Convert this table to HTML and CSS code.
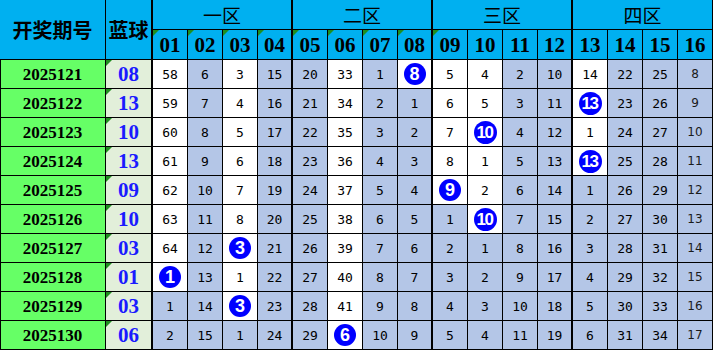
FILE: index.html
```html
<!DOCTYPE html>
<html lang="zh-CN">
<head>
<meta charset="utf-8">
<title>蓝球分区遗漏</title>
<link rel="stylesheet" href="styles.css">
</head>
<body>
<div class="sheet">
  <div class="row head">
    <div class="hp">开奖期号</div>
    <div class="hb">蓝球</div>
    <div class="hz">一区</div>
    <div class="hz">二区</div>
    <div class="hz">三区</div>
    <div class="hz last">四区</div>
  </div>
  <div class="row nums">
    <div class="spacer"></div><div class="spacer"></div>
    <div class="hn tri">01</div><div class="hn tri">02</div><div class="hn tri">03</div><div class="hn tri">04</div>
    <div class="hn tri">05</div><div class="hn tri">06</div><div class="hn tri">07</div><div class="hn tri">08</div>
    <div class="hn tri">09</div><div class="hn">10</div><div class="hn">11</div><div class="hn">12</div>
    <div class="hn">13</div><div class="hn">14</div><div class="hn">15</div><div class="hn">16</div>
  </div>

  <div class="row">
    <div class="p">2025121</div><div class="b tri">08</div>
    <div class="c w">58</div><div class="c">6</div><div class="c w">3</div><div class="c">15</div>
    <div class="c">20</div><div class="c w">33</div><div class="c">1</div><div class="c w"><span class="ball">8</span></div>
    <div class="c w">5</div><div class="c w">4</div><div class="c">2</div><div class="c">10</div>
    <div class="c w">14</div><div class="c">22</div><div class="c">25</div><div class="c">8</div>
  </div>
  <div class="row">
    <div class="p">2025122</div><div class="b tri">13</div>
    <div class="c w">59</div><div class="c">7</div><div class="c w">4</div><div class="c">16</div>
    <div class="c">21</div><div class="c w">34</div><div class="c">2</div><div class="c">1</div>
    <div class="c w">6</div><div class="c w">5</div><div class="c">3</div><div class="c">11</div>
    <div class="c w"><span class="ball two">13</span></div><div class="c">23</div><div class="c">26</div><div class="c">9</div>
  </div>
  <div class="row">
    <div class="p">2025123</div><div class="b tri">10</div>
    <div class="c w">60</div><div class="c">8</div><div class="c w">5</div><div class="c">17</div>
    <div class="c">22</div><div class="c w">35</div><div class="c">3</div><div class="c">2</div>
    <div class="c w">7</div><div class="c w"><span class="ball two">10</span></div><div class="c">4</div><div class="c">12</div>
    <div class="c w">1</div><div class="c">24</div><div class="c">27</div><div class="c">10</div>
  </div>
  <div class="row">
    <div class="p">2025124</div><div class="b tri">13</div>
    <div class="c w">61</div><div class="c">9</div><div class="c w">6</div><div class="c">18</div>
    <div class="c">23</div><div class="c w">36</div><div class="c">4</div><div class="c">3</div>
    <div class="c w">8</div><div class="c w">1</div><div class="c">5</div><div class="c">13</div>
    <div class="c w"><span class="ball two">13</span></div><div class="c">25</div><div class="c">28</div><div class="c">11</div>
  </div>
  <div class="row">
    <div class="p">2025125</div><div class="b tri">09</div>
    <div class="c w">62</div><div class="c">10</div><div class="c w">7</div><div class="c">19</div>
    <div class="c">24</div><div class="c w">37</div><div class="c">5</div><div class="c">4</div>
    <div class="c w"><span class="ball">9</span></div><div class="c w">2</div><div class="c">6</div><div class="c">14</div>
    <div class="c">1</div><div class="c">26</div><div class="c">29</div><div class="c">12</div>
  </div>
  <div class="row">
    <div class="p">2025126</div><div class="b tri">10</div>
    <div class="c w">63</div><div class="c">11</div><div class="c w">8</div><div class="c">20</div>
    <div class="c">25</div><div class="c w">38</div><div class="c">6</div><div class="c">5</div>
    <div class="c">1</div><div class="c w"><span class="ball two">10</span></div><div class="c">7</div><div class="c">15</div>
    <div class="c">2</div><div class="c">27</div><div class="c">30</div><div class="c">13</div>
  </div>
  <div class="row">
    <div class="p">2025127</div><div class="b tri">03</div>
    <div class="c w">64</div><div class="c">12</div><div class="c w"><span class="ball">3</span></div><div class="c">21</div>
    <div class="c">26</div><div class="c w">39</div><div class="c">7</div><div class="c">6</div>
    <div class="c">2</div><div class="c">1</div><div class="c">8</div><div class="c">16</div>
    <div class="c">3</div><div class="c">28</div><div class="c">31</div><div class="c">14</div>
  </div>
  <div class="row">
    <div class="p">2025128</div><div class="b tri">01</div>
    <div class="c w"><span class="ball">1</span></div><div class="c">13</div><div class="c w">1</div><div class="c">22</div>
    <div class="c">27</div><div class="c w">40</div><div class="c">8</div><div class="c">7</div>
    <div class="c">3</div><div class="c">2</div><div class="c">9</div><div class="c">17</div>
    <div class="c">4</div><div class="c">29</div><div class="c">32</div><div class="c">15</div>
  </div>
  <div class="row">
    <div class="p">2025129</div><div class="b tri">03</div>
    <div class="c">1</div><div class="c">14</div><div class="c w"><span class="ball">3</span></div><div class="c">23</div>
    <div class="c">28</div><div class="c w">41</div><div class="c">9</div><div class="c">8</div>
    <div class="c">4</div><div class="c">3</div><div class="c">10</div><div class="c">18</div>
    <div class="c">5</div><div class="c">30</div><div class="c">33</div><div class="c">16</div>
  </div>
  <div class="row">
    <div class="p">2025130</div><div class="b tri">06</div>
    <div class="c">2</div><div class="c">15</div><div class="c">1</div><div class="c">24</div>
    <div class="c">29</div><div class="c w"><span class="ball">6</span></div><div class="c">10</div><div class="c">9</div>
    <div class="c">5</div><div class="c">4</div><div class="c">11</div><div class="c">19</div>
    <div class="c">6</div><div class="c">31</div><div class="c">34</div><div class="c">17</div>
  </div>
</div>
</body>
</html>
```

FILE: styles.css
```css
html, body {
  margin: 0;
  padding: 0;
  background: #ffffff;
}

.sheet {
  display: grid;
  grid-template-columns: 106px 47px repeat(16, 35px);
  grid-template-rows: 30px 30px repeat(10, 29px);
  width: 713px;
}

.row {
  display: contents;
}

.row > div {
  box-sizing: border-box;
  border-right: 1px solid #000;
  border-bottom: 1px solid #000;
  display: flex;
  align-items: center;
  justify-content: center;
  position: relative;
  overflow: hidden;
}

.row > .spacer {
  display: none;
}

/* header */
.hp, .hb, .hz, .hn {
  background: #00b0f0;
  color: #000;
}

.hp, .hb {
  grid-row: span 2;
  font-family: "Noto Sans CJK SC", sans-serif;
  font-weight: 700;
  font-size: 20px;
}

.head > .hb {
  border-right-width: 2px;
}

.hz {
  grid-column: span 4;
  font-family: "Noto Sans CJK SC", sans-serif;
  font-size: 19px;
  font-weight: 400;
  border-right-width: 2px !important;
}

.head > .hz.last {
  border-right-width: 1px !important;
}

.hn {
  font-family: "Liberation Serif", serif;
  font-weight: 700;
  font-size: 21px;
  padding-top: 1px;
}

/* thick zone separators */
.row > div:nth-child(4n+2):not(:last-child) {
  border-right-width: 2px;
}

/* data */
.p {
  background: #66ff66;
  font-family: "Liberation Serif", serif;
  font-weight: 700;
  font-size: 17px;
  color: #000;
  box-shadow: inset 1px 0 0 #000;
  padding-top: 1px;
}

.b {
  background: #e2efda;
  font-family: "Liberation Serif", serif;
  font-weight: 700;
  font-size: 21px;
  color: #1a1aff;
  padding-top: 1px;
}

.c {
  background: #b4c6e7;
  font-family: "DejaVu Sans Mono", monospace;
  font-size: 13px;
  color: #000;
}

.c.w {
  background: #ffffff;
}

.row > .c:last-child {
  font-family: "DejaVu Sans", sans-serif;
  font-size: 12px;
  color: #1a1a1a;
}

.ball {
  width: 22px;
  height: 22px;
  border-radius: 50%;
  background: #0000ff;
  color: #ffffff;
  font-family: "Liberation Sans", sans-serif;
  font-weight: 700;
  font-size: 18px;
  display: flex;
  align-items: center;
  justify-content: center;
  line-height: 1;
}

.ball.two {
  width: 23px;
  height: 23px;
  font-family: "Liberation Sans Narrow", "Liberation Sans", sans-serif;
  font-size: 17px;
  letter-spacing: -1.5px;
  text-indent: -1px;
}

/* green "number as text" marker */
.tri::before {
  content: "";
  position: absolute;
  top: 0;
  left: 0;
  width: 0;
  height: 0;
  border-top: 6px solid #1f8f1f;
  border-right: 6px solid transparent;
}
```
